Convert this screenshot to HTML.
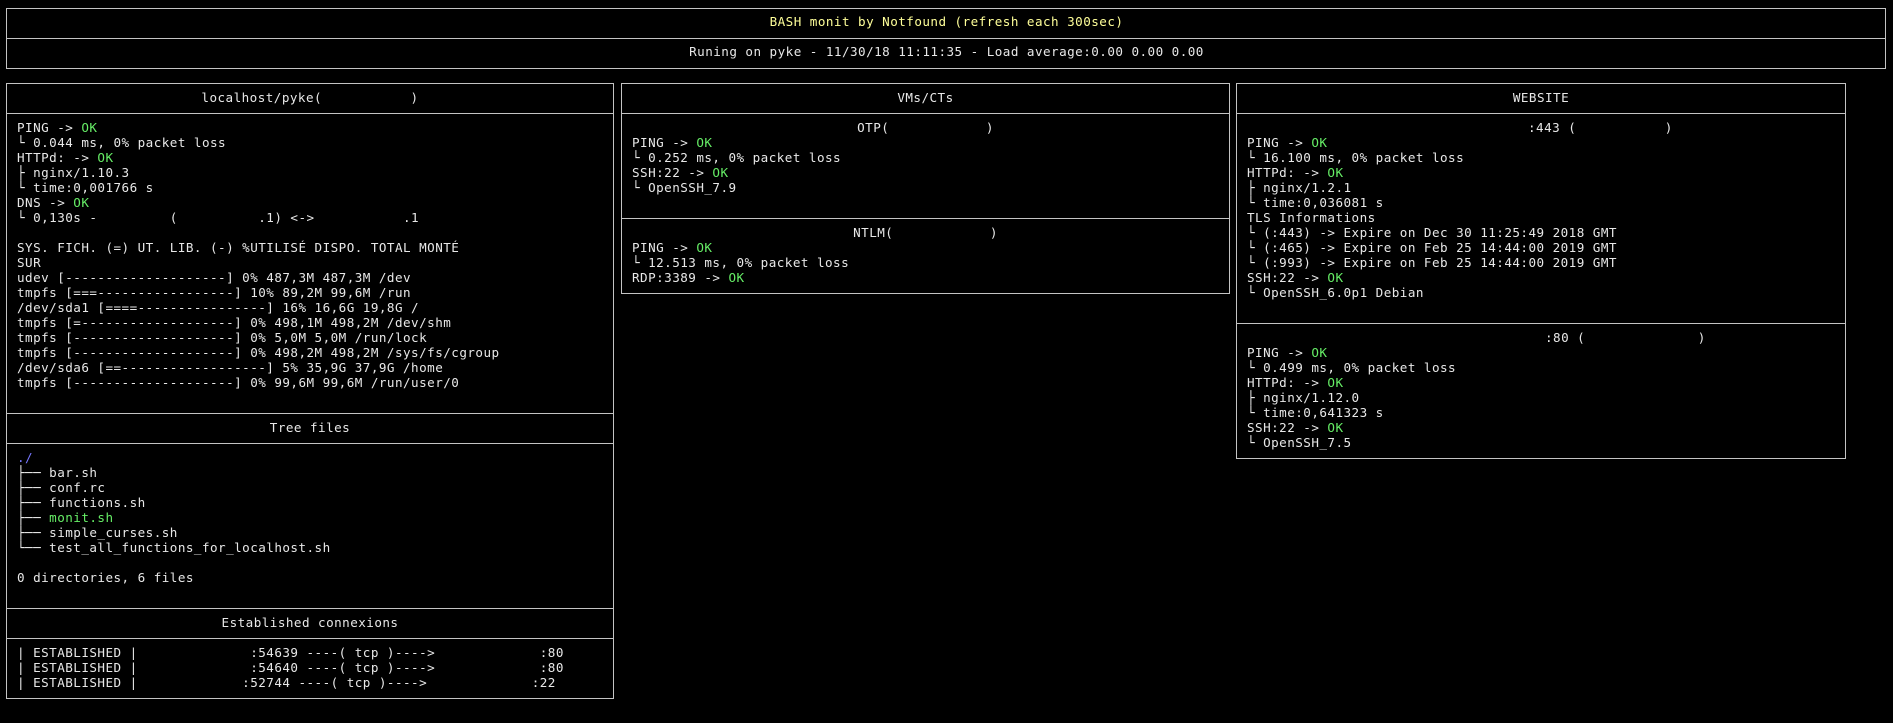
<!DOCTYPE html>
<html><head><meta charset="utf-8"><style>
html,body{margin:0;padding:0;background:#000;width:1893px;height:723px;overflow:hidden}
body{position:relative;font-family:"DejaVu Sans Mono","Liberation Mono",monospace;font-size:12.6px;letter-spacing:0.46px;color:#e8e8e8}
.b{position:absolute;border:1px solid #c4c4c4;box-sizing:border-box}
.h{position:absolute;left:0;right:0;border-top:1px solid #c4c4c4}
pre{margin:0;font:inherit;line-height:15px;white-space:pre;position:absolute}
.c{left:0;right:0;text-align:center}
.g{color:#66ee66}
.y{color:#ffff99}
.p{color:#7777ff}
</style></head><body>
<div class="b" style="left:6px;top:8px;width:1880px;height:61px"><div class="h" style="top:29px"></div></div>
<pre class="c y" style="top:14px">BASH monit by Notfound (refresh each 300sec)</pre>
<pre class="c" style="top:44px">Runing on pyke - 11/30/18 11:11:35 - Load average:0.00 0.00 0.00</pre>

<div class="b" style="left:6px;top:83px;width:608px;height:616px">
<div class="h" style="top:29px"></div><div class="h" style="top:329px"></div><div class="h" style="top:359px"></div><div class="h" style="top:524px"></div><div class="h" style="top:554px"></div>
</div>
<pre style="left:6px;width:608px;top:90px;text-align:center">localhost/pyke(           )</pre>
<pre style="left:17px;top:120px">PING -> <span class="g">OK</span>
└ 0.044 ms, 0% packet loss
HTTPd: -> <span class="g">OK</span>
├ nginx/1.10.3
└ time:0,001766 s
DNS -> <span class="g">OK</span>
└ 0,130s -         (          .1) <->           .1

SYS. FICH. (=) UT. LIB. (-) %UTILISÉ DISPO. TOTAL MONTÉ
SUR
udev [--------------------] 0% 487,3M 487,3M /dev
tmpfs [===-----------------] 10% 89,2M 99,6M /run
/dev/sda1 [====----------------] 16% 16,6G 19,8G /
tmpfs [=-------------------] 0% 498,1M 498,2M /dev/shm
tmpfs [--------------------] 0% 5,0M 5,0M /run/lock
tmpfs [--------------------] 0% 498,2M 498,2M /sys/fs/cgroup
/dev/sda6 [==------------------] 5% 35,9G 37,9G /home
tmpfs [--------------------] 0% 99,6M 99,6M /run/user/0</pre>
<pre style="left:6px;width:608px;top:420px;text-align:center">Tree files</pre>
<pre style="left:17px;top:450px"><span class="p">./</span>
├── bar.sh
├── conf.rc
├── functions.sh
├── <span class="g">monit.sh</span>
├── simple_curses.sh
└── test_all_functions_for_localhost.sh

0 directories, 6 files</pre>
<pre style="left:6px;width:608px;top:615px;text-align:center">Established connexions</pre>
<pre style="left:17px;top:645px">| ESTABLISHED |              :54639 ----( tcp )---->             :80
| ESTABLISHED |              :54640 ----( tcp )---->             :80
| ESTABLISHED |             :52744 ----( tcp )---->             :22</pre>

<div class="b" style="left:621px;top:83px;width:609px;height:211px">
<div class="h" style="top:29px"></div><div class="h" style="top:134px"></div>
</div>
<pre style="left:621px;width:609px;top:90px;text-align:center">VMs/CTs</pre>
<pre style="left:621px;width:609px;top:120px;text-align:center">OTP(            )</pre>
<pre style="left:632px;top:135px">PING -> <span class="g">OK</span>
└ 0.252 ms, 0% packet loss
SSH:22 -> <span class="g">OK</span>
└ OpenSSH_7.9</pre>
<pre style="left:621px;width:609px;top:225px;text-align:center">NTLM(            )</pre>
<pre style="left:632px;top:240px">PING -> <span class="g">OK</span>
└ 12.513 ms, 0% packet loss
RDP:3389 -> <span class="g">OK</span></pre>

<div class="b" style="left:1236px;top:83px;width:610px;height:376px">
<div class="h" style="top:29px"></div><div class="h" style="top:239px"></div>
</div>
<pre style="left:1236px;width:610px;top:90px;text-align:center">WEBSITE</pre>
<pre style="left:1528px;top:120px">:443 (           )</pre>
<pre style="left:1247px;top:135px">PING -> <span class="g">OK</span>
└ 16.100 ms, 0% packet loss
HTTPd: -> <span class="g">OK</span>
├ nginx/1.2.1
└ time:0,036081 s
TLS Informations
└ (:443) -> Expire on Dec 30 11:25:49 2018 GMT
└ (:465) -> Expire on Feb 25 14:44:00 2019 GMT
└ (:993) -> Expire on Feb 25 14:44:00 2019 GMT
SSH:22 -> <span class="g">OK</span>
└ OpenSSH_6.0p1 Debian</pre>
<pre style="left:1545px;top:330px">:80 (              )</pre>
<pre style="left:1247px;top:345px">PING -> <span class="g">OK</span>
└ 0.499 ms, 0% packet loss
HTTPd: -> <span class="g">OK</span>
├ nginx/1.12.0
└ time:0,641323 s
SSH:22 -> <span class="g">OK</span>
└ OpenSSH_7.5</pre>
</body></html>
